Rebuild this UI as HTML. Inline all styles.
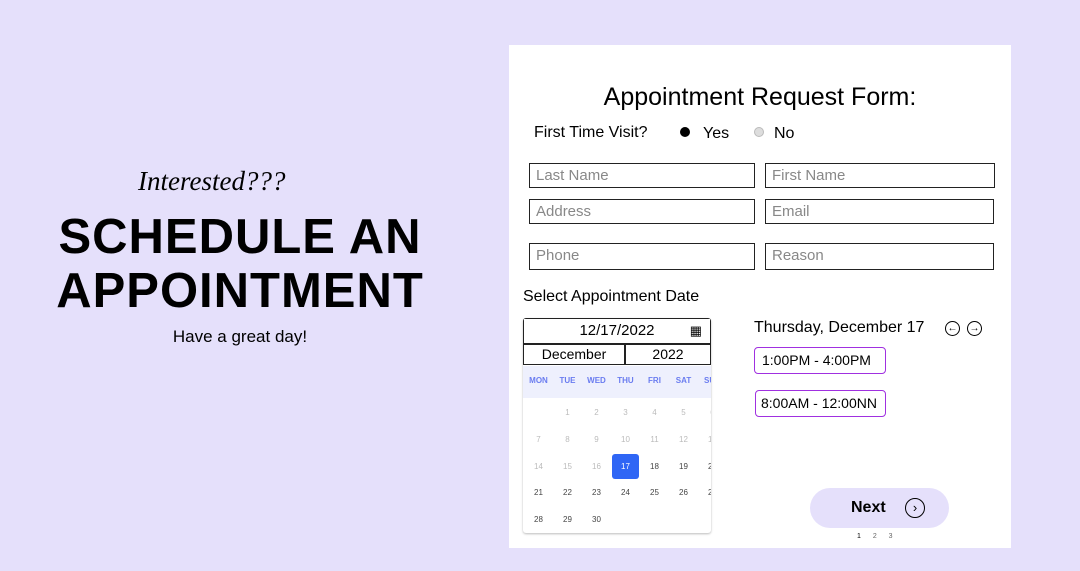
<html><head><style>
body{margin:0;width:1080px;height:571px;background:#e5e0fb;position:relative;overflow:hidden;font-family:"Liberation Sans",sans-serif}
.a{position:absolute}
.card{left:509px;top:45px;width:502px;height:503px;background:#fff}
.in{border:1px solid #222;height:25px;width:224px;box-sizing:border-box;font-size:15px;color:#888;padding:3px 6px}
.d{position:absolute;width:29px;text-align:center;font-size:8px;color:#bbb}
.h{color:#6a7cf0;font-weight:bold;font-size:8px}
.slot{border:1.5px solid #a030e0;border-radius:4px;font-size:14px;padding:4px 7px;box-sizing:border-box;height:27px}
</style></head><body>
<div class="a" style="left:138px;top:166px;font-family:'Liberation Serif',serif;font-style:italic;font-size:27px">Interested???</div>
<div class="a" style="left:40px;top:210px;width:400px;text-align:center;font-weight:bold;font-size:49px;line-height:54px;letter-spacing:1px">SCHEDULE AN<br>APPOINTMENT</div>
<div class="a" style="left:40px;top:327px;width:400px;text-align:center;font-size:17px">Have a great day!</div>
<div class="a card"></div>
<div class="a" style="left:509px;top:83px;width:502px;text-align:center;font-size:25px">Appointment Request Form:</div>
<div class="a" style="left:534px;top:124px;font-size:16px">First Time Visit?</div>
<div class="a" style="left:680px;top:127px;width:10px;height:10px;border-radius:50%;background:#000"></div>
<div class="a" style="left:703px;top:125px;font-size:16px">Yes</div>
<div class="a" style="left:754px;top:127px;width:10px;height:10px;border-radius:50%;background:#ddd;border:1px solid #bbb;box-sizing:border-box"></div>
<div class="a" style="left:774px;top:125px;font-size:16px">No</div>
<div class="a in" style="left:529px;top:163px;width:226px">Last Name</div>
<div class="a in" style="left:765px;top:163px;width:230px">First Name</div>
<div class="a in" style="left:529px;top:199px;width:226px">Address</div>
<div class="a in" style="left:765px;top:199px;width:229px">Email</div>
<div class="a in" style="left:529px;top:243px;width:226px;height:27px">Phone</div>
<div class="a in" style="left:765px;top:243px;width:229px;height:27px">Reason</div>
<div class="a" style="left:523px;top:288px;font-size:16px">Select Appointment Date</div>
<div class="a" style="left:523px;top:318px;width:188px;height:215px;border-radius:3px;box-shadow:0 1px 2px #bbb;overflow:hidden;background:#fff">
<div class="a" style="left:0;top:0;width:186px;height:24px;border:1px solid #222;font-size:15px;text-align:center;line-height:24px">12/17/2022<span style="position:absolute;right:8px;font-size:13px">▦</span></div>
<div class="a" style="left:0;top:26px;width:100px;height:19px;border:1px solid #222;font-size:14px;text-align:center;line-height:19px">December</div>
<div class="a" style="left:102px;top:26px;width:84px;height:19px;border:1px solid #222;font-size:14px;text-align:center;line-height:19px">2022</div>
<div class="a" style="left:0;top:48px;width:188px;height:32px;background:#eef0fd"></div>
</div>
<div class="a" style="left:612px;top:454px;width:27px;height:25px;background:#2f66f5;border-radius:3px"></div>
<div class="a" style="left:523px;top:318px;width:188px;height:215px;overflow:hidden" id="cal"></div>
<script>
var c=document.getElementById('cal'),xs=[15,44,73,102,131,160,189],h=['MON','TUE','WED','THU','FRI','SAT','SUN'],s='';
h.forEach((t,i)=>s+='<div class="d h" style="left:'+(xs[i]-14)+'px;top:58px">'+t+'</div>');
var ys=[90,117,144,170,197];
for(var n=1;n<=30;n++){var r=Math.floor(n/7),col=n%7;var cc=n<17?'#bbb':(n==17?'#fff':'#444');s+='<div class="d" style="left:'+(xs[col]-14)+'px;top:'+ys[r]+'px;color:'+cc+'">'+n+'</div>';}
c.innerHTML=s;
</script>
<div class="a" style="left:754px;top:319px;font-size:16px">Thursday, December 17</div>
<div class="a" style="left:945px;top:321px;width:13px;height:13px;border:1px solid #000;border-radius:50%;font-size:10px;line-height:13px;text-align:center">←</div>
<div class="a" style="left:967px;top:321px;width:13px;height:13px;border:1px solid #000;border-radius:50%;font-size:10px;line-height:13px;text-align:center">→</div>
<div class="a slot" style="left:754px;top:347px;width:132px">1:00PM - 4:00PM</div>
<div class="a slot" style="left:755px;top:390px;width:131px;padding-left:5px">8:00AM - 12:00NN</div>
<div class="a" style="left:810px;top:488px;width:139px;height:40px;border-radius:20px;background:#e5e0fb"></div>
<div class="a" style="left:851px;top:499px;font-size:16px;font-weight:bold">Next</div>
<div class="a" style="left:905px;top:498px;width:18px;height:18px;border:1.5px solid #000;border-radius:50%;font-size:13px;line-height:18px;text-align:center">›</div>
<div class="a" style="left:857px;top:533px;font-size:7px;word-spacing:10px">1 <span style="color:#666">2 3</span></div>
</body></html>
